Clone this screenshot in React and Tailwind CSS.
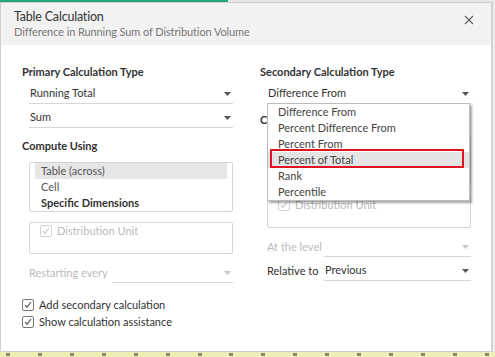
import React from "react";

function Arrow({ disabled }) {
  return (
    <svg width="7" height="4" viewBox="0 0 7 4" className="shrink-0">
      <path d="M0 0h7L3.5 4z" fill={disabled ? "#c8c8c8" : "#555"} />
    </svg>
  );
}

function Check({ disabled }) {
  const c = disabled ? "#c9c9c9" : "#555";
  return (
    <span
      className={`w-[12px] h-[12px] rounded-[2px] border flex items-center justify-center shrink-0 bg-white ${
        disabled ? "border-[#d2d2d2]" : "border-[#777]"
      }`}
    >
      <svg width="8" height="8" viewBox="0 0 8 8">
        <path d="M1 4.2l2 2.1L7 1" fill="none" stroke={c} strokeWidth="1.2" />
      </svg>
    </span>
  );
}

function Select({ value, disabled, className = "" }) {
  return (
    <div
      className={`h-[20px] flex items-center justify-between border-b border-[#d6d6d6] pl-[1px] pr-[2px] ${className}`}
    >
      <span className={`whitespace-nowrap ${disabled ? "text-[#bbb]" : "text-[#333]"}`}>{value}</span>
      <Arrow disabled={disabled} />
    </div>
  );
}

function ListBox({ empty }) {
  return (
    <div className="h-[50px] border border-[#d4d4d4] rounded-[2px] px-[5px] leading-[16px]">
      {!empty && (
        <>
          <div className="bg-[#e6e6e6] pl-[6px] text-[#555]">Table (across)</div>
          <div className="pl-[6px] text-[#555]">Cell</div>
          <div className="pl-[6px] font-bold text-[#333]">Specific Dimensions</div>
        </>
      )}
    </div>
  );
}

function DimBox() {
  return (
    <div className="h-[32px] border border-[#d4d4d4] rounded-[2px] pl-[10px] pt-[2px]">
      <div className="flex items-center gap-[5px] h-[12px]">
        <Check disabled />
        <span className="text-[#bbb] whitespace-nowrap">Distribution Unit</span>
      </div>
    </div>
  );
}

const items = [
  "Difference From",
  "Percent Difference From",
  "Percent From",
  "Percent of Total",
  "Rank",
  "Percentile",
];

export default function App() {
  return (
    <div
      className="w-[495px] h-[357px] bg-[#e4e4e4] overflow-hidden flex flex-col text-[11px]"
      style={{ fontFamily: "Lato, 'Open Sans', sans-serif" }}
    >
      <div className="h-[2px] flex shrink-0">
        <div className="w-[228px] bg-[#23a57c]" />
        <div className="flex-1 bg-[#e9e9e9]" />
      </div>
      <div className="flex h-[350px] shrink-0">
        <div className="w-[492px] h-full bg-white border border-[#cfcfcf] flex flex-col shadow-[0_1px_2px_rgba(0,0,0,0.25)]">
          <div className="h-[42px] bg-[#f2f2f2] px-[13px] pt-[6px] flex justify-between shrink-0">
            <div>
              <div className="text-[12.5px] leading-[16px] text-[#333] tracking-[-0.2px]">Table Calculation</div>
              <div className="text-[11px] leading-[14px] text-[#777] tracking-[-0.1px]">
                Difference in Running Sum of Distribution Volume
              </div>
            </div>
            <svg width="10" height="10" viewBox="0 0 10 10" className="mt-[6px] mr-[4px]">
              <path d="M1 1l8 8M9 1l-8 8" stroke="#666" strokeWidth="1.2" />
            </svg>
          </div>

          <div className="flex-1 flex pl-[21px] pt-[19px]">
            <div className="w-[211px] flex flex-col">
              <div className="font-bold text-[#333] leading-[16px] whitespace-nowrap">Primary Calculation Type</div>
              <div className="pl-[7px] mt-[4px] flex flex-col gap-[4px]">
                <Select value="Running Total" />
                <Select value="Sum" />
              </div>
              <div className="font-bold text-[#333] leading-[16px] mt-[10px]">Compute Using</div>
              <div className="pl-[7px] mt-[8px] flex flex-col gap-[10px]">
                <ListBox />
                <DimBox />
              </div>
              <div className="pl-[7px] mt-[9px] flex items-center">
                <span className="text-[#bbb] w-[83px] shrink-0 whitespace-nowrap">Restarting every</span>
                <Select value="" disabled className="flex-1" />
              </div>
              <div className="mt-[16px] flex flex-col gap-[5px]">
                <div className="flex items-center gap-[5px] h-[12px]">
                  <Check />
                  <span className="text-[#333] whitespace-nowrap">Add secondary calculation</span>
                </div>
                <div className="flex items-center gap-[5px] h-[12px]">
                  <Check />
                  <span className="text-[#333] whitespace-nowrap">Show calculation assistance</span>
                </div>
              </div>
            </div>

            <div className="w-[211px] ml-[27px] flex flex-col relative">
              <div className="font-bold text-[#333] leading-[16px] whitespace-nowrap">Secondary Calculation Type</div>
              <div className="pl-[7px] mt-[4px]">
                <Select value="Difference From" />
              </div>
              <div className="font-bold text-[#333] leading-[16px] mt-[8px] w-[7px] overflow-hidden">C</div>
              <div className="pl-[7px] mt-[8px] flex flex-col gap-[10px]">
                <ListBox empty />
                <DimBox />
              </div>
              <div className="pl-[7px] mt-[9px] flex flex-col gap-[4px]">
                <div className="flex items-center">
                  <span className="text-[#bbb] w-[57px] shrink-0 whitespace-nowrap">At the level</span>
                  <Select value="" disabled className="flex-1" />
                </div>
                <div className="flex items-center">
                  <span className="text-[#333] w-[57px] shrink-0 whitespace-nowrap">Relative to</span>
                  <Select value="Previous" className="flex-1" />
                </div>
              </div>

              <div className="absolute left-[7px] top-[39px] w-[203px] bg-white border border-[#bdbdbd] shadow-[2px_2px_2px_rgba(0,0,0,0.35)] leading-[16px]">
                {items.map((t, i) => (
                  <div
                    key={t}
                    className={`pl-[10px] text-[#444] whitespace-nowrap ${i === 3 ? "bg-[#e4e4e4]" : ""}`}
                  >
                    {t}
                  </div>
                ))}
                <div className="absolute left-[2px] top-[45px] w-[194px] h-[19px] border-2 border-[#e0141e]" />
              </div>
            </div>
          </div>
        </div>
        <div className="flex-1 bg-[#ececec] border-l border-[#d8d8d8]" />
      </div>
      <div className="flex-1 bg-[#eeeeb6] flex items-center justify-between px-[6px]">
        {Array.from({ length: 16 }).map((_, i) => (
          <span key={i} className="w-[4px] h-[3px] bg-[#8a8a70]" />
        ))}
      </div>
    </div>
  );
}
